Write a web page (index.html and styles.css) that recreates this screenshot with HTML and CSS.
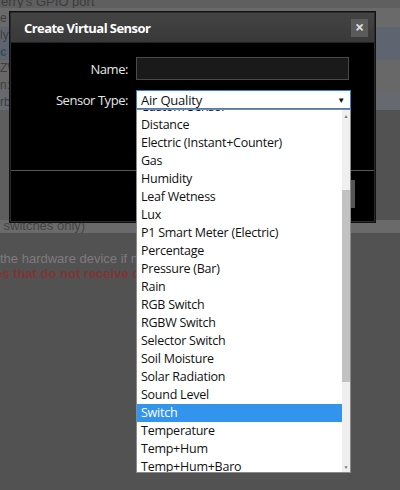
FILE: index.html
```html
<!DOCTYPE html>
<html>
<head>
<meta charset="utf-8">
<link rel="stylesheet" href="styles.css">
</head>
<body>
<div class="page">
  <div class="row r1"><span class="txt">erry's GPIO port</span></div>
  <div class="row r2"><span class="txt">e</span></div>
  <div class="row r3"><span class="txt">ly</span><span class="txt teal">c</span></div>
  <div class="row r4"><span class="txt">ZW</span><span class="txt">n:</span></div>
  <div class="row r5"><span class="txt">rb</span></div>
  <div class="row r6"></div>
  <div class="row r7"><span class="txt">l switches only)</span></div>
  <div class="row r8">
    <span class="txt light">the hardware device if no data</span>
    <span class="txt red">es that do not receive data</span>
  </div>
</div>

<div class="modal">
  <div class="modal-header">
    <span class="title">Create Virtual Sensor</span>
    <span class="close">&times;</span>
  </div>
  <div class="modal-body">
    <div class="field">
      <label class="lbl">Name:</label>
      <div class="input"></div>
    </div>
    <div class="field">
      <label class="lbl">Sensor Type:</label>
      <div class="select"><span>Air Quality</span><span class="arrow">&#9660;</span></div>
    </div>
  </div>
  <div class="modal-footer">
    <div class="btn"></div>
  </div>
</div>

<div class="dropdown">
  <ul class="list">
    <li>Custom Sensor</li>
    <li>Distance</li>
    <li>Electric (Instant+Counter)</li>
    <li>Gas</li>
    <li>Humidity</li>
    <li>Leaf Wetness</li>
    <li>Lux</li>
    <li>P1 Smart Meter (Electric)</li>
    <li>Percentage</li>
    <li>Pressure (Bar)</li>
    <li>Rain</li>
    <li>RGB Switch</li>
    <li>RGBW Switch</li>
    <li>Selector Switch</li>
    <li>Soil Moisture</li>
    <li>Solar Radiation</li>
    <li>Sound Level</li>
    <li class="sel">Switch</li>
    <li>Temperature</li>
    <li>Temp+Hum</li>
    <li>Temp+Hum+Baro</li>
    <li>Temp+Hum+Baro+Wind</li>
  </ul>
  <div class="scrollbar">
    <span class="sarrow up">&#9650;</span>
    <div class="thumb"></div>
    <span class="sarrow down">&#9660;</span>
  </div>
</div>
</body>
</html>
```

FILE: styles.css
```css
html, body {
  margin: 0;
  padding: 0;
  width: 400px;
  height: 490px;
  overflow: hidden;
  background: #525252;
  font-family: "Liberation Sans", Arial, sans-serif;
}

.page {
  display: flex;
  flex-direction: column;
}

.row {
  display: flex;
  flex-direction: column;
  font-size: 12px;
  color: #3e3e3e;
}
.txt { display: block; line-height: 14px; white-space: nowrap; }

.r1 { height: 8px; background: #5f5f5f; overflow: hidden; }
.r1 .txt { margin-top: -5px; margin-left: 1px; font-size: 13px; color: #3c3c3c; }
.r2 { height: 19px; background: #6a6a6a; justify-content: center; }
.r3 { height: 33px; background: #5f6570; justify-content: space-around; }
.r3 .teal { color: #2f4f5a; font-weight: bold; }
.r4 { height: 33px; background: #686868; justify-content: space-around; }
.r5 { height: 17px; background: #666970; justify-content: center; }
.r6 { height: 110px; background: #525252; border-left: 10px solid #5e5e5e; box-sizing: border-box; }
.r7 { height: 13px; background: #6a6a6a; overflow: hidden; }
.r7 .txt { margin-top: -1px; font-size: 13px; color: #444; margin-left: -3px; }
.r8 { padding-top: 18px; font-size: 13px; }
.r8 .light { color: #7c7c7c; line-height: 15px; }
.r8 .red { color: #7e3535; font-weight: bold; line-height: 15px; margin-left: -5px; }

/* modal */
.modal {
  position: absolute;
  left: 10px;
  top: 12px;
  width: 365px;
  height: 210px;
  box-sizing: border-box;
  background: #000;
  border: 1px solid #2a2a2a;
  box-shadow: 0 0 0 1px #111;
  display: flex;
  flex-direction: column;
  font-family: "Open Sans", "Noto Sans", sans-serif;
}
.modal-header {
  height: 29px;
  background: linear-gradient(#444444, #383838);
  border-bottom: 1px solid #222;
  display: flex;
  align-items: center;
  justify-content: space-between;
  padding: 0 6px 0 13px;
}
.title {
  color: #fff;
  font-weight: bold;
  font-size: 13px;
  letter-spacing: -0.55px;
}
.close {
  width: 17px;
  height: 18px;
  background: #5a5a5a;
  color: #ddd;
  font-weight: bold;
  font-size: 16px;
  line-height: 17px;
  text-align: center;
}
.modal-body {
  height: 128px;
  box-sizing: border-box;
  padding-top: 14px;
  border-bottom: 1px solid #575757;
  display: flex;
  flex-direction: column;
  gap: 10px;
}
.field {
  display: flex;
  align-items: center;
  gap: 8px;
}
.lbl {
  width: 117px;
  text-align: right;
  color: #e6e6e6;
  font-size: 13px;
  letter-spacing: -0.45px;
}
.input {
  width: 213px;
  height: 23px;
  box-sizing: border-box;
  background: #1a1a1a;
  border: 1px solid #4a4a4a;
}
.select {
  width: 215px;
  height: 19px;
  box-sizing: border-box;
  background: #fff;
  border: 1px solid #3b7fd0;
  display: flex;
  align-items: center;
  justify-content: space-between;
  padding: 0 5px 0 4px;
  font-size: 13px;
  letter-spacing: -0.2px;
  color: #111;
}
.arrow { font-size: 8px; color: #111; }
.modal-footer {
  flex: 1;
  display: flex;
  justify-content: flex-end;
  align-items: flex-start;
  padding: 9px 19px 0 0;
}
.btn {
  width: 60px;
  height: 28px;
  background: #555;
}

/* dropdown list overlay */
.dropdown {
  position: absolute;
  left: 136px;
  top: 109px;
  width: 215px;
  height: 364px;
  box-sizing: border-box;
  background: #fff;
  border: 1px solid #8a8a8a;
  overflow: hidden;
  display: flex;
  font-family: "Open Sans", "Noto Sans", sans-serif;
}
.list {
  list-style: none;
  margin: -12px 0 0 0;
  padding: 0;
  flex: 1;
}
.list li {
  height: 18px;
  line-height: 18px;
  padding-left: 4px;
  font-size: 12.5px;
  letter-spacing: -0.25px;
  color: #111;
  white-space: nowrap;
}
.list li.sel {
  background: #3394ee;
  color: #fff;
}
.scrollbar {
  width: 8px;
  background: #efefef;
  position: relative;
  display: flex;
  flex-direction: column;
}
.sarrow {
  font-size: 5px;
  color: #777;
  text-align: center;
  height: 10px;
  line-height: 10px;
}
.up { margin-top: 1px; }
.thumb {
  margin-top: 69px;
  height: 192px;
  background: #c2c2c2;
}
.down { margin-top: auto; }
```
